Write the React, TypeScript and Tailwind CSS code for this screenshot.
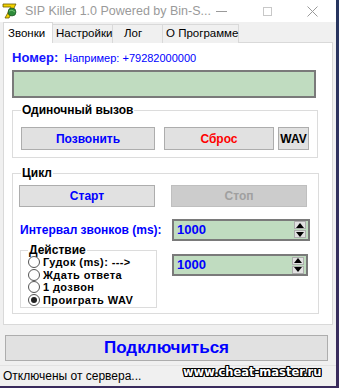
import React from "react";

const ui = "font-['Liberation_Sans',Arial,sans-serif]";

function Btn({
  children,
  className = "",
}: {
  children: React.ReactNode;
  className?: string;
}) {
  return (
    <div
      className={`flex items-center justify-center border border-[#adadad] bg-[#e1e1e1] font-bold ${className}`}
    >
      {children}
    </div>
  );
}

function Arrow({ up }: { up?: boolean }) {
  return (
    <div className="flex h-[8px] w-[12px] items-center justify-center border border-[#adadad] bg-[#e1e1e1]">
      <svg width="8" height="5" viewBox="0 0 8 5">
        {up ? <path d="M0 5 L4 0 L8 5 Z" fill="#000" /> : <path d="M0 0 L4 5 L8 0 Z" fill="#000" />}
      </svg>
    </div>
  );
}

function Spin({ value, className = "" }: { value: string; className?: string }) {
  return (
    <div
      className={`flex h-[22px] items-center border-2 border-[#7a7a7a] bg-[#c0dcc0] pl-[3px] pr-[2px] ${className}`}
    >
      <span className="flex-1 text-[13px] font-bold text-[#0000ff]">{value}</span>
      <div className="flex flex-col gap-px">
        <Arrow up />
        <Arrow />
      </div>
    </div>
  );
}

function Radio({ label, checked }: { label: string; checked?: boolean }) {
  return (
    <div className="flex h-[12.5px] items-center gap-[3px]">
      <span className="flex h-[12px] w-[12px] shrink-0 items-center justify-center rounded-full border border-[#555] bg-white">
        {checked && <span className="h-[6px] w-[6px] rounded-full bg-[#222]" />}
      </span>
      <span className="text-[11px] font-bold leading-[12px] tracking-[0.4px] text-black">{label}</span>
    </div>
  );
}

function Logo() {
  return (
    <svg width="16" height="16" viewBox="0 0 16 16">
      <path d="M1 1 H14 L7 15 H3 L9 4 H1 Z" fill="#f2d200" stroke="#6b5a00" strokeWidth="0.8" />
      <circle cx="10" cy="9" r="4" fill="#2e8b3a" stroke="#1a4a20" strokeWidth="0.6" />
      <path d="M7 8 Q10 6 13 9" stroke="#7fd07f" strokeWidth="0.8" fill="none" />
    </svg>
  );
}

export default function App() {
  return (
    <div className={`relative h-[388px] w-[339px] overflow-hidden bg-gradient-to-b from-[#26355f] to-[#3a2b5c] ${ui}`}>
      <div className="flex h-[386px] w-[336px] flex-col bg-[#f0f0f0]">
        {/* title bar */}
        <div className="flex h-[22px] items-center bg-white">
          <div className="ml-[2px] mr-[7px]">
            <Logo />
          </div>
          <span className="flex-1 whitespace-nowrap text-[12.5px] text-[#9a9a9a]">SIP Killer 1.0 Powered by Bin-S...</span>
          <div className="flex h-full items-center">
            <span className="mr-[36px] h-px w-[11px] bg-[#9a9a9a]" />
            <span className="mr-[35px] h-[9px] w-[9px] border border-[#c8c8c8]" />
            <svg className="mr-[18px]" width="11" height="11" viewBox="0 0 11 11">
              <path d="M0.5 0.5 L10.5 10.5 M10.5 0.5 L0.5 10.5" stroke="#9a9a9a" strokeWidth="1" />
            </svg>
          </div>
        </div>

        {/* tabs */}
        <div className="relative z-10 flex h-[21px] items-end whitespace-nowrap pl-[3px] text-[11.5px] text-black">
          <div className="flex h-[21px] w-[50px] items-start border border-b-0 border-[#d9d9d9] bg-white pl-[4px] pt-[2px]">
            Звонки
          </div>
          <div className="flex h-[19px] w-[60px] items-center border border-b-0 border-l-0 border-[#d9d9d9] bg-[#f0f0f0] pl-[3px]">
            Настройки
          </div>
          <div className="flex h-[19px] w-[50px] items-center border border-b-0 border-l-0 border-[#d9d9d9] bg-[#f0f0f0] pl-[11px]">
            Лог
          </div>
          <div className="flex h-[19px] w-[76px] items-center border border-b-0 border-l-0 border-[#d9d9d9] bg-[#f0f0f0] pl-[3px]">
            О Программе
          </div>
        </div>

        {/* panel */}
        <div className="mx-[3px] -mt-px h-[283px] border border-[#d9d9d9] bg-white pl-[8px] pr-[16px] pt-[6px]">
          <div className="flex h-[18px] items-center gap-[6px] text-[#0000ff]">
            <span className="text-[13px] font-bold text-[#1414ff]">Номер:</span>
            <span className="text-[11px]">Например: +79282000000</span>
          </div>
          <div className="mt-[3px] h-[28px] border-2 border-[#7a7a7a] bg-[#c0dcc0]" />

          <fieldset className="mt-[5px] h-[55px] border border-[#dcdcdc] px-[8px]">
            <legend className="px-px text-[12px] font-bold leading-[14px] text-black">Одиночный вызов</legend>
            <div className="mt-[10px] flex h-[23px] text-[12px]">
              <Btn className="w-[134px] text-[#0000ff]">Позвонить</Btn>
              <Btn className="ml-[9px] w-[110px] text-[#ff0000]">Сброс</Btn>
              <Btn className="ml-[4px] w-[31px] text-black">WAV</Btn>
            </div>
          </fieldset>

          <fieldset className="mt-[8px] h-[148px] border border-[#dcdcdc] pl-[6px] pr-[8px]">
            <legend className="ml-[2px] px-px text-[12px] font-bold leading-[14px] text-black">Цикл</legend>
            <div className="mt-[5px] flex h-[22px] text-[12px]">
              <Btn className="w-[136px] text-[#0000ff]">Старт</Btn>
              <div className="ml-[16px] flex w-[136px] items-center justify-center border border-[#bfbfbf] bg-[#cccccc] font-bold text-[#a0a0a0]">
                Стоп
              </div>
            </div>
            <div className="mt-[12px] flex h-[21px] items-center">
              <span className="ml-px w-[152px] whitespace-nowrap text-[12px] font-bold text-[#0000ff]">Интервал звонков (ms):</span>
              <Spin value="1000" className="w-[138px]" />
            </div>
            <div className="mt-[4px] flex items-start">
              <fieldset className="ml-px h-[64px] w-[137px] border border-[#dcdcdc] pl-[7px]">
                <legend className="px-px text-[12px] font-bold leading-[12px] text-black">Действие</legend>
                <div className="flex flex-col">
                  <Radio label="Гудок (ms): --->" />
                  <Radio label="Ждать ответа" />
                  <Radio label="1 дозвон" />
                  <Radio label="Проиграть WAV" checked />
                </div>
              </fieldset>
              <Spin value="1000" className="ml-[15px] mt-[10px] w-[136px]" />
            </div>
          </fieldset>
        </div>

        {/* connect */}
        <div className="ml-[5px] mt-[10px] flex h-[26px] w-[323px] items-center justify-center border border-[#adadad] bg-[#e1e1e1] text-[17px] font-bold text-[#0000ff]">
          Подключиться
        </div>
        <div className="mt-[4px] flex h-[20px] items-center border-t border-[#e3e3e3] pl-[3px] text-[12px] text-black">
          Отключены от сервера...
        </div>
      </div>

      <div className="absolute left-[183px] top-[364px] font-['DejaVu_Sans',Verdana,sans-serif] text-[11.5px] font-bold text-white [text-shadow:-1px_-1px_0_#000,1px_-1px_0_#000,-1px_1px_0_#000,1px_1px_0_#000,0_1px_0_#000,0_-1px_0_#000,1px_0_0_#000,-1px_0_0_#000]">
        www.cheat-master.ru
      </div>
    </div>
  );
}
